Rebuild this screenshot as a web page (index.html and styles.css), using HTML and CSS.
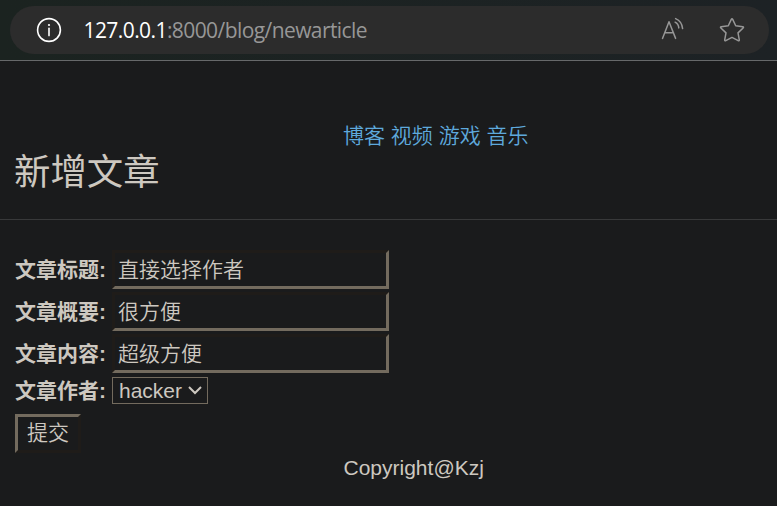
FILE: index.html
```html
<!DOCTYPE html>
<html lang="zh-CN">
<head>
<meta charset="utf-8">
<title>新增文章</title>
<link rel="stylesheet" href="styles.css">
</head>
<body>
<header class="toolbar">
  <div class="address">
    <svg class="info" viewBox="0 0 26 26" width="26" height="26"><circle cx="13" cy="13" r="11.4"/><path d="M13 11.4v7.2"/><circle class="dot" cx="13" cy="8" r="1.1"/></svg>
    <div class="url"><span class="host">127.0.0.1</span>:8000/blog/newarticle</div>
    <svg class="read" viewBox="0 0 26 26" width="26" height="26"><path d="M2.5 21.4 9 4.8l6.6 16.6M4.7 15.8h8.8M15.1 5.2c2.2 1.1 3.5 3 3.7 5.7M15.6 1.6c4.2 1.8 6.6 5.2 7 10"/></svg>
    <svg class="star" viewBox="0 0 26 26" width="26" height="26"><path d="M12.3 2.4Q13 1.1 13.7 2.4l3 6.3 7 1q1.4.3.4 1.3l-5.1 4.9 1.3 7q.1 1.3-1.1.8L13 20.4l-6.2 3.3q-1.2.5-1.1-.8l1.3-7L1.9 11q-1-1 .4-1.3l7-1z"/></svg>
  </div>
</header>
<nav class="links"><a>博客</a> <a>视频</a> <a>游戏</a> <a>音乐</a></nav>
<h1 class="title">新增文章</h1>
<form class="form">
  <div class="row"><label for="title">文章标题:</label><input id="title" value="直接选择作者"></div>
  <div class="row"><label for="intro">文章概要:</label><input id="intro" value="很方便"></div>
  <div class="row"><label for="content">文章内容:</label><input id="content" value="超级方便"></div>
  <div class="row author"><label for="author">文章作者:</label><div class="pick"><select id="author"><option>hacker</option></select><svg class="chevron" viewBox="0 0 14 9" width="14" height="9"><path d="m1 1 6 6 6-6"/></svg></div></div>
  <button class="submit" type="button">提交</button>
</form>
<footer class="footer">Copyright@Kzj</footer>
</body>
</html>
```
FILE: styles.css
```css
* { box-sizing: border-box; }
body {
  margin: 0;
  height: 506px;
  overflow: hidden;
  background: #1a1b1c;
  color: #cdc8c0;
  font: 21px/28px "Liberation Sans", "Noto Sans CJK SC", sans-serif;
}
.toolbar {
  height: 61px;
  padding: 6px 8px 0 10px;
  background: linear-gradient(90deg, #1b2320, #1d2225);
  border-bottom: 1px solid #67696a;
}
.address {
  display: flex;
  align-items: center;
  height: 48px;
  padding: 0 24px 0 26px;
  border-radius: 24px;
  background: #2c2c2c;
}
.address svg { fill: none; stroke: #979797; stroke-width: 1.5; stroke-linecap: round; stroke-linejoin: round; }
.address .info { stroke: #fff; stroke-width: 1.6; }
.address .dot { fill: #fff; stroke: none; }
.url {
  flex: 1;
  margin-left: 21.5px;
  color: #979797;
  font: 21px/28px "Open Sans", "Noto Sans", sans-serif;
  letter-spacing: -0.58px;
}
.host { color: #fff; }
.read { margin-right: 33px; }
.links {
  margin: 61px 0 0 343px;
  height: 28px;
  color: #5ea9dc;
  font-weight: 350;
}
.title {
  height: 70px;
  margin: 0;
  padding: 5px 0 0 14px;
  border-bottom: 1px solid #38393a;
  font-size: 36.4px;
  line-height: 36px;
  font-weight: 400;
}
.form {
  display: flex;
  flex-direction: column;
  align-items: flex-start;
  padding: 30px 0 0 15px;
}
.row { display: flex; align-items: center; height: 39px; margin-bottom: 3px; }
.row label { width: 97px; font-weight: 700; white-space: nowrap; }
.row input {
  width: 277px;
  height: 39px;
  padding: 0 3px 4px;
  border: 3px solid;
  border-color: #1f1c19 #736b5e #736b5e #1f1c19;
  background: transparent;
  color: inherit;
  font: inherit;
  font-weight: 350;
  outline: 0;
}
.author { height: 27px; margin: 1px 0 10px; }
.pick { position: relative; width: 96px; height: 27px; }
.pick select {
  appearance: none;
  width: 96px;
  height: 27px;
  padding: 0 6px;
  border: 1px solid #736b5e;
  border-radius: 0;
  background: transparent;
  color: inherit;
  font: 21px/25px "Liberation Sans", sans-serif;
}
.chevron { position: absolute; right: 6px; top: 9px; fill: none; stroke: #cdc8c0; stroke-width: 2; pointer-events: none; }
.submit {
  width: 66px;
  height: 39px;
  padding: 0 0 1px;
  border: 3px solid;
  border-color: #736b5e #1f1c19 #1f1c19 #736b5e;
  background: transparent;
  color: inherit;
  font: inherit;
  font-weight: 350;
}
.footer { margin: 1px 0 0 343.5px; }
```
